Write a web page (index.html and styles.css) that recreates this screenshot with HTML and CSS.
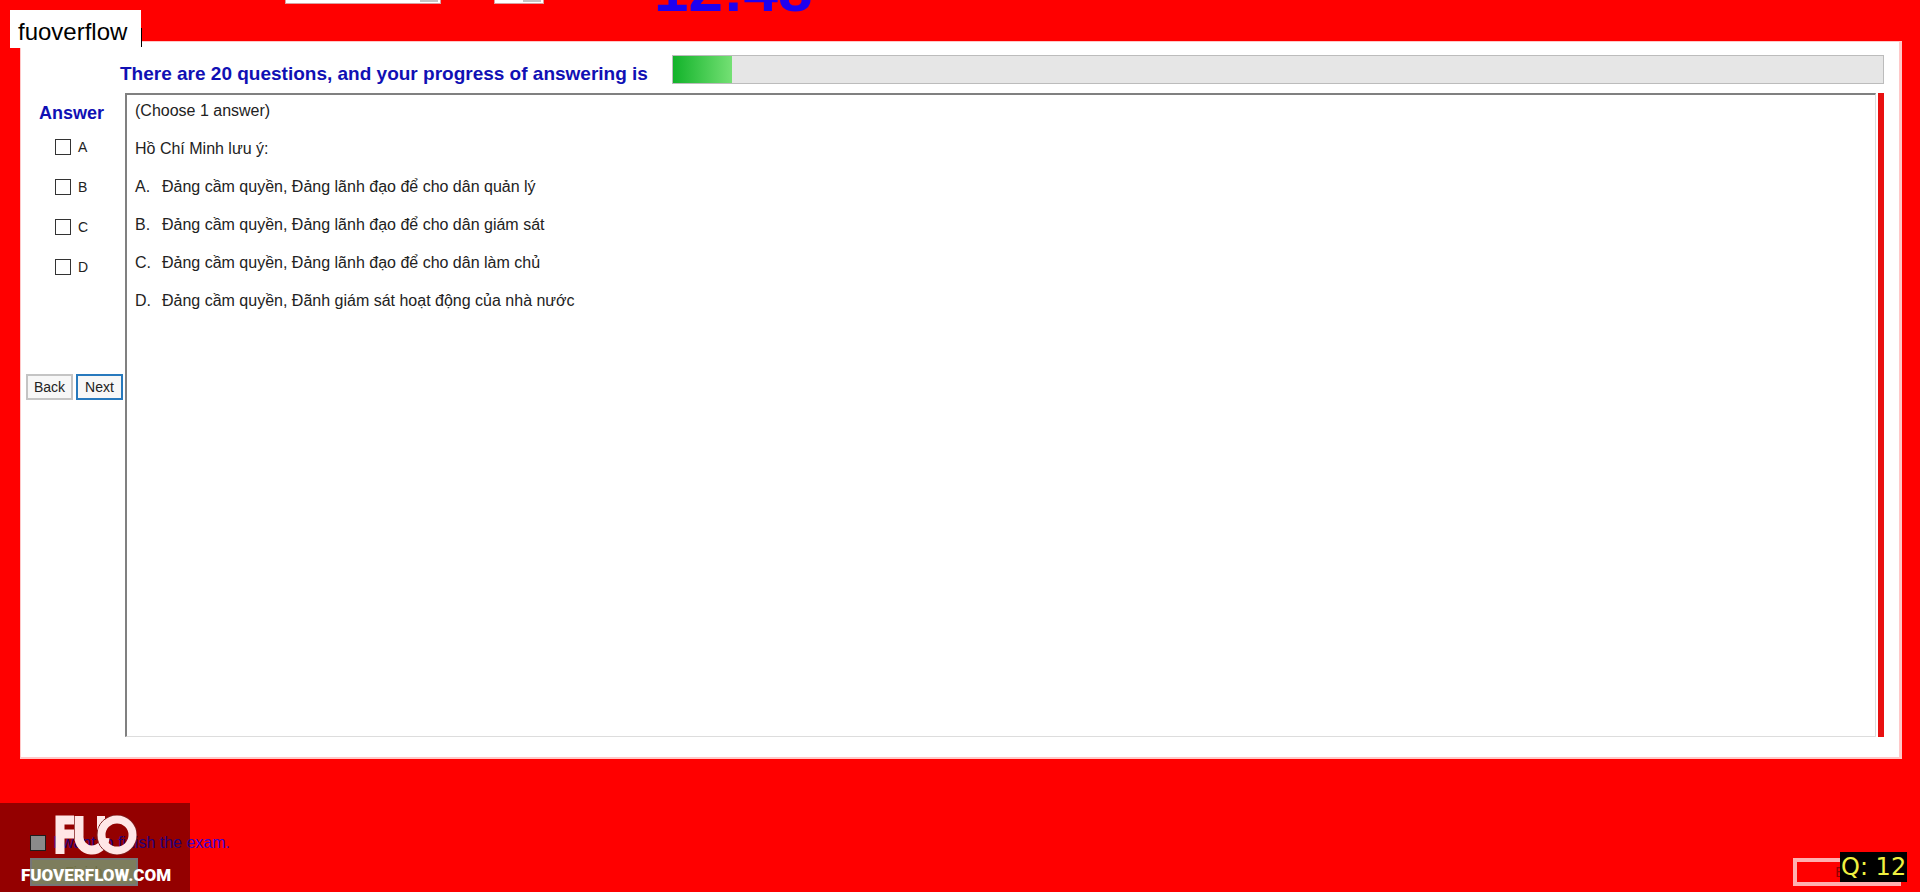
FILE: index.html
```
<!DOCTYPE html>
<html lang="vi">
<head>
  <meta charset="UTF-8" />
  <meta name="viewport" content="width=device-width, initial-scale=1.0"/>
  <title>fuoverflow</title>
  <link rel="stylesheet" href="styles.css">
</head>
<body>

  <!-- Exam toolbar, scrolled under the top edge -->
  <header class="toolbar">
    <select class="font-select" aria-label="Font">
      <option>Microsoft Sans Serif</option>
    </select>
    <select class="size-select" aria-label="Size">
      <option>10</option>
    </select>
    <div class="clock">12:48</div>
  </header>

  <div class="page-tag">fuoverflow</div>

  <main class="exam">
    <div class="progress-row">
      <h1 class="progress-text" id="progress-text">There are 20 questions, and your progress of answering is</h1>
      <div class="progress" role="progressbar" aria-labelledby="progress-text">
        <div class="progress-done"></div>
      </div>
    </div>

    <div class="exam-body">
      <!-- Answer column -->
      <aside class="answers">
        <h2>Answer</h2>
        <label class="choice"><input type="checkbox"> A</label>
        <label class="choice"><input type="checkbox"> B</label>
        <label class="choice"><input type="checkbox"> C</label>
        <label class="choice"><input type="checkbox"> D</label>
        <div class="answer-buttons">
          <button type="button">Back</button>
          <button type="button" class="focused">Next</button>
        </div>
      </aside>

      <!-- Question -->
      <section class="question">
        <p>(Choose 1 answer)</p>
        <p>Hồ Chí Minh lưu ý:</p>
        <ul>
          <li><span>A.</span>Đảng cầm quyền, Đảng lãnh đạo để cho dân quản lý</li>
          <li><span>B.</span>Đảng cầm quyền, Đảng lãnh đạo để cho dân giám sát</li>
          <li><span>C.</span>Đảng cầm quyền, Đảng lãnh đạo để cho dân làm chủ</li>
          <li><span>D.</span>Đảng cầm quyền, Đãnh giám sát hoạt động của nhà nước</li>
        </ul>
      </section>
      <div class="red-strip"></div>
    </div>
  </main>

  <footer class="bottom">
    <div class="finish">
      <label class="finish-check"><input type="checkbox"> I want to finish the exam.</label>
      <button type="button" class="finish-btn">Finish</button>
    </div>
    <button type="button" class="exit-btn">Exit</button>

    <!-- Logo over the finish controls -->
    <div class="watermark">
      <svg class="logo" width="82" height="40" viewBox="0 0 82 40" aria-hidden="true">
        <g fill="none" stroke="#ffe6e6" stroke-width="8">
          <path d="M5 39V5H19M5 19H19" stroke-width="9"/>
          <path d="M24 1V21A13 13 0 0 0 50 23" stroke-width="9"/>
          <path d="M46 1V16"/>
          <path d="M19.500 1V24" stroke="#a05050" stroke-width="1"/>
          <circle cx="62" cy="20" r="20" stroke="#7a2020" stroke-width="1"/>
          <circle cx="62" cy="20" r="15.500"/>
        </g>
      </svg>
      <span>FUOVERFLOW.COM</span>
    </div>
    <div class="question-number">Q: 12</div>
  </footer>

</body>
</html>
```
FILE: styles.css
```
* {
  box-sizing: border-box;
}

body {
  font-family: "Liberation Sans", Arial, sans-serif;
  margin: 0;
  min-height: 100vh;
  display: flex;
  flex-direction: column;
  background-color: #ff0000;
  color: #222;
  font-size: 16px;
}

h1, h2, p, ul {
  margin: 0;
}

/* Top toolbar */
.toolbar {
  height: 41px;
  padding-left: 285px;
  display: flex;
  align-items: flex-start;
  overflow: hidden;
}

.toolbar select {
  appearance: none;
  height: 28px;
  margin-top: -24px;
  padding: 0 4px;
  background: linear-gradient(#c4c4c4, #c4c4c4) right 2px top 0 / 18px 25px no-repeat white;
  border: 1px solid #d8a0a0;
  border-radius: 0;
}

.font-select {
  width: 156px;
}

.size-select {
  width: 50px;
  margin-left: 53px;
}

.clock {
  margin: -45px 0 0 110px;
  font-size: 62px;
  line-height: 70px;
  font-weight: bold;
  color: #1e00f0;
}

/* Name box in the corner */
.page-tag {
  position: absolute;
  left: 10px;
  top: 10px;
  width: 131px;
  height: 38px;
  padding-left: 8px;
  background-color: white;
  color: black;
  font-size: 24px;
  line-height: 44px;
}

.page-tag::after {
  content: "";
  position: absolute;
  left: 131px;
  bottom: 1px;
  width: 1px;
  height: 19px;
  background-color: black;
}

/* White exam panel */
.exam {
  flex: 1;
  display: flex;
  flex-direction: column;
  margin: 0 18px 0 20px;
  padding: 13px 15px 20px 5px;
  background-color: white;
  border: 1px solid #ffc8c8;
  border-right-width: 3px;
  border-bottom-width: 2px;
}

.progress-row {
  display: flex;
  align-items: flex-start;
  gap: 24px;
  padding-left: 94px;
}

.progress-text {
  color: #1010b4;
  font-size: 19px;
  line-height: 38px;
}

.progress {
  flex: 1;
  height: 29px;
  background-color: #e6e6e6;
  border: 1px solid #bcbcbc;
}

.progress-done {
  width: 59px;
  height: 100%;
  background: linear-gradient(to right, #12b32a, #74e074);
}

.exam-body {
  flex: 1;
  display: flex;
}

.answers {
  width: 99px;
  display: flex;
  flex-direction: column;
}

.answers h2 {
  color: #1010b4;
  font-size: 18px;
  line-height: 28px;
  padding: 6px 0 0 13px;
}

.choice {
  height: 40px;
  display: flex;
  align-items: center;
  gap: 7px;
  padding-left: 29px;
  font-size: 14px;
}

input[type="checkbox"] {
  appearance: none;
  width: 16px;
  height: 16px;
  margin: 0;
  background-color: white;
  border: 1px solid #333;
}

.answer-buttons {
  display: flex;
  gap: 3px;
  margin-top: 87px;
}

button {
  font-family: inherit;
  font-size: 14px;
  color: #222;
  padding: 0;
  border-radius: 0;
}

.answer-buttons button {
  width: 47px;
  height: 26px;
  background-color: #f7f7f7;
  border: 2px solid #c4c4c4;
}

.answer-buttons .focused {
  border-color: #2779bd;
}

.question {
  flex: 1;
  border: 1px solid #ddd;
  border-top: 2px solid #808080;
  border-left: 2px solid #808080;
  padding: 0 8px;
}

.question p,
.question li {
  line-height: 32px;
  margin-bottom: 6px;
}

.question ul {
  padding: 0;
  list-style: none;
}

.question li {
  display: flex;
}

.question li span {
  width: 27px;
}

.red-strip {
  width: 6px;
  margin-left: 2px;
  background-color: #e81010;
}

/* Bottom area */
.bottom {
  position: relative;
  height: 133px;
  padding: 72px 19px 0 30px;
  display: flex;
  justify-content: space-between;
}

.finish-check {
  display: flex;
  align-items: center;
  gap: 7px;
  height: 24px;
  color: #4000d0;
  font-size: 16px;
}

.finish-check input {
  background-color: #eee;
}

.finish-btn {
  width: 108px;
  height: 28px;
  margin-top: 3px;
  background-color: #d8d8a0;
  color: #c4c478;
  border: 2px solid #ccc;
}

.exit-btn {
  width: 108px;
  height: 28px;
  margin-top: 27px;
  background-color: transparent;
  color: #900000;
  border: 4px solid #ffb0b0;
}

.watermark {
  position: absolute;
  left: 0;
  bottom: 0;
  width: 190px;
  height: 89px;
  padding: 12px 0 0 2px;
  display: flex;
  flex-direction: column;
  align-items: center;
  background-color: rgba(0, 0, 0, 0.42);
  color: white;
  font-family: Roboto, "Liberation Sans", sans-serif;
  font-weight: 900;
  font-size: 17px;
  line-height: 40px;
}

.logo {
  flex: none;
}

.question-number {
  position: absolute;
  right: 13px;
  bottom: 10px;
  width: 67px;
  height: 30px;
  padding-left: 1px;
  background-color: black;
  color: #f0f040;
  font-family: "DejaVu Sans", sans-serif;
  font-size: 24px;
  line-height: 30px;
}
```
